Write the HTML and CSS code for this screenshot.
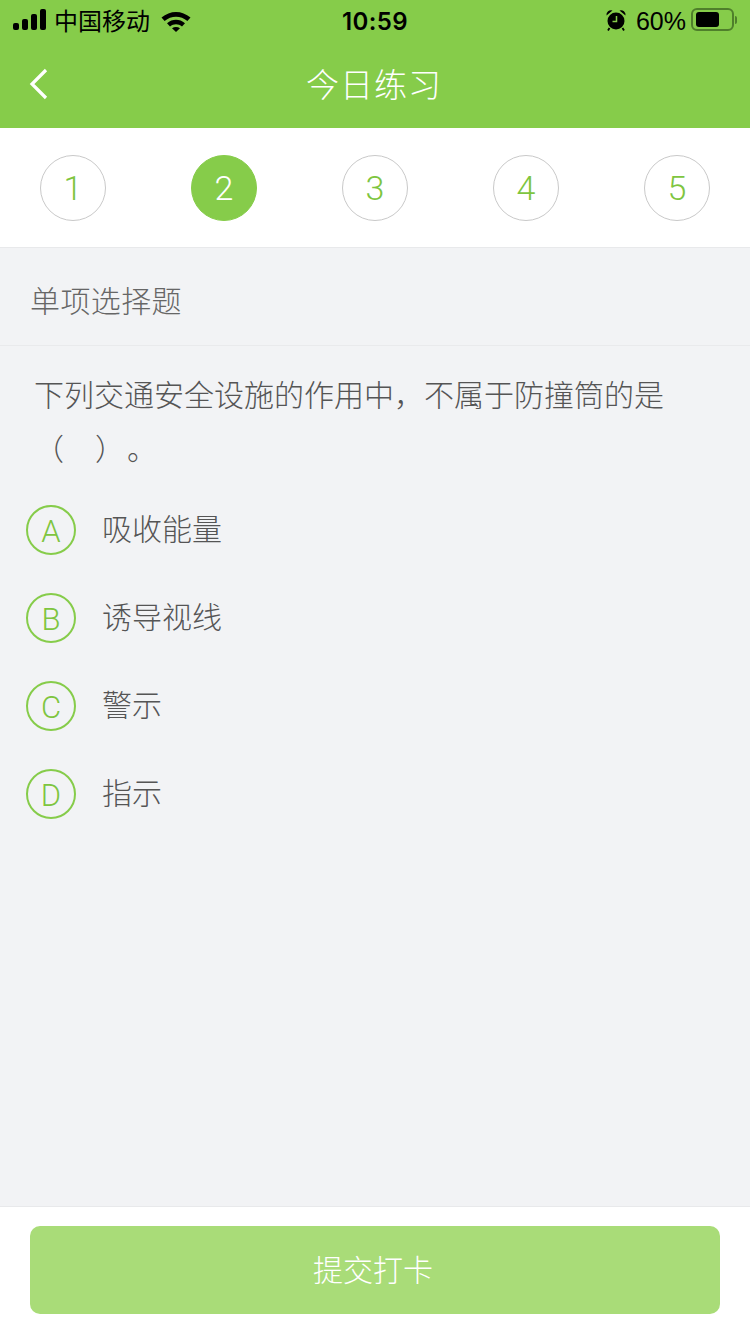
FILE: index.html
```html
<!DOCTYPE html>
<html lang="zh-CN">
<head>
    <meta charset="UTF-8">
    <meta name="viewport" content="width=device-width, initial-scale=1.0">
    <title>今日练习</title>
    <link rel="stylesheet" href="styles.css">
</head>
<body>

    <div class="page">
        <header class="top">
            <div class="status-bar">
                <div class="status-left">
                    <div class="signal"><i></i><i></i><i></i><i></i></div>
                    <span class="carrier">中国移动</span>
                    <svg class="wifi" width="30" height="22" viewBox="0 0 30 22">
                        <path d="M0.5 7.5 C9 0 21 0 29.5 7.5 L26.4 11 C19.8 5.2 10.2 5.2 3.6 11 Z" fill="#000"/>
                        <path d="M6 13.2 C11.4 8.6 18.6 8.6 24 13.2 L21 16.4 C17.4 13.4 12.6 13.4 9 16.4 Z" fill="#000"/>
                        <path d="M11 18.3 C13.4 16.6 16.6 16.6 19 18.3 L15 22 Z" fill="#000"/>
                    </svg>
                </div>
                <div class="status-time">10:59</div>
                <div class="status-right">
                    <svg class="alarm" width="22" height="22" viewBox="0 0 22 22">
                        <circle cx="11" cy="12" r="8.5" fill="#000"/>
                        <path d="M1.5 6.5 A4.5 4.5 0 0 1 7.5 1.5 Z M14.5 1.5 A4.5 4.5 0 0 1 20.5 6.5 Z" fill="#000"/>
                        <path d="M4.5 19 L3 21.5 M17.5 19 L19 21.5" stroke="#000" stroke-width="1.8"/>
                        <path d="M11.5 7 V12.5 H7.5" stroke="#86cc4a" stroke-width="1.5" fill="none"/>
                    </svg>
                    <span class="percent">60%</span>
                    <div class="battery"><div class="battery-level"></div></div>
                    <div class="battery-cap"></div>
                </div>
            </div>
            <div class="nav-bar">
                <svg class="back" width="20" height="34" viewBox="0 0 20 34">
                    <path d="M17 3 L3 17 L17 31" fill="none" stroke="#fff" stroke-width="3.2"/>
                </svg>
                <h1>今日练习</h1>
            </div>
        </header>

        <div class="steps">
            <div class="step">1</div>
            <div class="step active">2</div>
            <div class="step">3</div>
            <div class="step">4</div>
            <div class="step">5</div>
        </div>

        <main class="content">
            <div class="type">单项选择题</div>
            <div class="question">下列交通安全设施的作用中，不属于防撞筒的是<br>（<span class="gap"></span>）<span class="stop">。</span></div>
            <div class="options">
                <div class="option"><span class="letter">A</span><span class="label">吸收能量</span></div>
                <div class="option"><span class="letter">B</span><span class="label">诱导视线</span></div>
                <div class="option"><span class="letter">C</span><span class="label">警示</span></div>
                <div class="option"><span class="letter">D</span><span class="label">指示</span></div>
            </div>
        </main>

        <footer class="bottom">
            <button class="submit">提交打卡</button>
        </footer>
    </div>

</body>
</html>
```

FILE: styles.css
```css
* {
    margin: 0;
    padding: 0;
    box-sizing: border-box;
}

body {
    font-family: "Liberation Sans", "Noto Sans CJK SC", sans-serif;
    background-color: #f2f3f5;
}

.page {
    width: 750px;
    height: 1334px;
    display: flex;
    flex-direction: column;
    overflow: hidden;
}

.top {
    height: 128px;
    background-color: #86cc4a;
}

.status-bar {
    height: 42px;
    padding: 0 13px 0 13px;
    display: flex;
    align-items: center;
    justify-content: space-between;
    color: #000;
}

.status-left,
.status-right {
    width: 240px;
    display: flex;
    align-items: center;
}

.status-right {
    justify-content: flex-end;
}

.signal {
    display: flex;
    align-items: flex-end;
    gap: 3px;
    height: 21px;
    margin-bottom: 3px;
}

.signal i {
    display: block;
    width: 6px;
    border-radius: 2px;
    background-color: #000;
}

.signal i:nth-child(1) { height: 7px; }
.signal i:nth-child(2) { height: 11px; }
.signal i:nth-child(3) { height: 16px; }
.signal i:nth-child(4) { height: 21px; }

.carrier {
    font-size: 24px;
    font-weight: 400;
    margin-left: 8px;
    margin-bottom: 3px;
}

.wifi {
    margin-left: 11px;
    margin-bottom: 1px;
}

.status-time {
    font-family: "Inter", "Liberation Sans", sans-serif;
    font-size: 24px;
    font-weight: 600;
    letter-spacing: 0.4px;
}

.alarm {
    margin-right: 9px;
    margin-bottom: 2px;
}

.percent {
    font-size: 25px;
    margin-right: 5px;
}

.battery {
    width: 43px;
    height: 23px;
    margin-bottom: 3px;
    padding: 2px 3px;
    border: 2px solid #4f7f2b;
    border-radius: 6px;
}

.battery-level {
    width: 23px;
    height: 100%;
    border-radius: 3px;
    background-color: #000;
}

.battery-cap {
    width: 2px;
    height: 8px;
    margin: 0 0 3px 1px;
    border-radius: 0 2px 2px 0;
    background-color: #4f7f2b;
}

.nav-bar {
    height: 86px;
    position: relative;
    display: flex;
    align-items: center;
    justify-content: center;
}

.back {
    position: absolute;
    left: 29px;
    top: 25px;
}

.nav-bar h1 {
    font-size: 33px;
    font-weight: 300;
    letter-spacing: 1px;
    margin: 0 0 4px -2px;
    color: #fff;
}

.steps {
    height: 120px;
    padding: 0 40px;
    display: flex;
    align-items: center;
    justify-content: space-between;
    background-color: #fff;
    border-bottom: 1px solid #e8e9eb;
}

.step {
    width: 66px;
    height: 66px;
    display: flex;
    align-items: center;
    justify-content: center;
    font-family: "Roboto", sans-serif;
    font-size: 34px;
    font-weight: 300;
    color: #7ec53f;
    border: 1px solid #c9c9c9;
    border-radius: 50%;
}

.step.active {
    color: #fff;
    background-color: #86cc4a;
    border-color: #86cc4a;
}

.content {
    flex: 1;
}

.type {
    height: 98px;
    padding: 4px 0 0 30px;
    display: flex;
    align-items: center;
    font-size: 30px;
    font-weight: 300;
    letter-spacing: 0.4px;
    color: #666;
    border-bottom: 1px solid #e9eaec;
}

.question {
    padding: 23px 35px 0 34px;
    font-size: 30px;
    font-weight: 300;
    line-height: 54px;
    color: #555;
    text-spacing-trim: space-all;
}

.gap {
    display: inline-block;
    width: 31px;
}

.stop {
    margin-left: 2px;
}

.options {
    padding: 0 26px;
    margin-top: 9px;
}

.option {
    height: 88px;
    display: flex;
    align-items: center;
    font-size: 30px;
    font-weight: 300;
    color: #555;
}

.label {
    margin-bottom: 6px;
}

.letter {
    width: 50px;
    height: 50px;
    margin-right: 26px;
    padding-top: 3px;
    display: flex;
    align-items: center;
    justify-content: center;
    font-family: "Roboto", sans-serif;
    font-size: 31px;
    font-weight: 300;
    color: #7ec53f;
    border: 2px solid #86cc4a;
    border-radius: 50%;
}

.bottom {
    height: 128px;
    padding: 19px 30px 0;
    background-color: #fff;
    border-top: 1px solid #e8e9eb;
}

.submit {
    width: 100%;
    height: 88px;
    padding: 0 4px 4px 0;
    font-family: inherit;
    font-size: 30px;
    font-weight: 300;
    color: #fff;
    background-color: #a9dc78;
    border: none;
    border-radius: 10px;
}
```
